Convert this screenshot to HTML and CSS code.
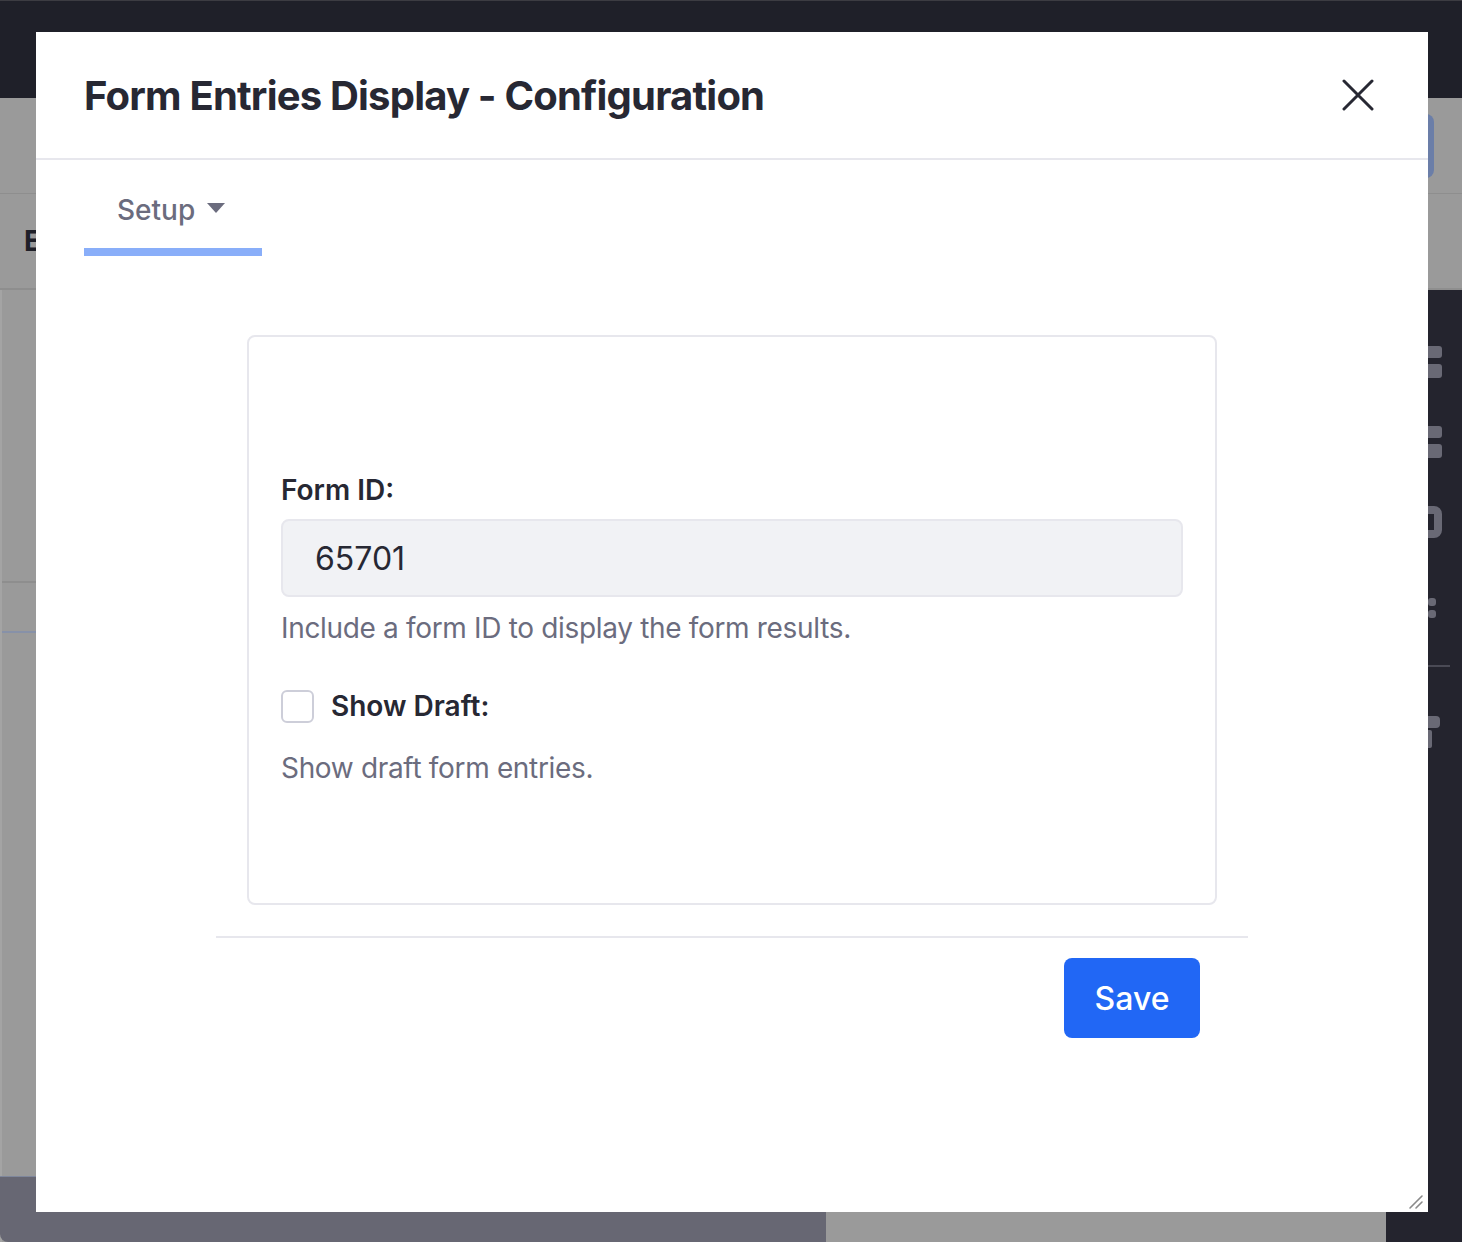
FILE: index.html
```html
<!DOCTYPE html>
<html lang="en">
<head>
<meta charset="utf-8">
<title>Form Entries Display - Configuration</title>
<link rel="stylesheet" href="styles.css">
</head>
<body>
<div class="page">
  <div class="topbar"></div>
  <div class="subheader">
    <div class="sub-row1"><div class="bg-btn"></div></div>
    <div class="sub-row2"><span class="bg-title">Entries</span></div>
  </div>
  <div class="main">
    <div class="content">
      <div class="c-a"></div>
      <div class="c-b"></div>
      <div class="c-c"></div>
      <div class="c-foot"></div>
    </div>
    <div class="sidebar">
      <svg class="side-icons" width="76" height="480" viewBox="0 0 76 480" fill="#696975">
        <rect x="20" y="56" width="36" height="12" rx="3"/>
        <rect x="20" y="74" width="36" height="14" rx="3"/>
        <rect x="20" y="136" width="36" height="12" rx="3"/>
        <rect x="20" y="154" width="36" height="14" rx="3"/>
        <rect x="24" y="220" width="28" height="24" rx="4" fill="none" stroke="#696975" stroke-width="8"/>
        <rect x="26" y="308" width="8" height="8" rx="3"/>
        <rect x="42" y="308" width="8" height="8" rx="3"/>
        <rect x="26" y="320" width="8" height="8" rx="3"/>
        <rect x="42" y="320" width="8" height="8" rx="3"/>
        <rect x="12" y="375" width="52" height="2" fill="#4a4a55"/>
        <rect x="24" y="426" width="30" height="12" rx="4"/>
        <rect x="40" y="440" width="6" height="18" rx="2"/>
      </svg>
    </div>
  </div>
</div>

<div class="modal" role="dialog" aria-labelledby="modal-title">
  <header class="modal-header">
    <h1 class="modal-title" id="modal-title">Form Entries Display - Configuration</h1>
    <button class="close-btn" type="button" aria-label="Close">
      <svg width="32" height="32" viewBox="0 0 32 32" fill="none" stroke="#272833" stroke-width="3" stroke-linecap="round">
        <path d="M2 2 L30 30 M30 2 L2 30"/>
      </svg>
    </button>
  </header>
  <div class="modal-body">
    <nav class="tabs">
      <a class="tab active" href="#">Setup <span class="caret"></span></a>
    </nav>
    <div class="container">
      <div class="card">
        <label class="field-label" for="formId">Form ID:</label>
        <input class="field-input" id="formId" type="text" value="65701">
        <p class="help">Include a form ID to display the form results.</p>
        <label class="check-row">
          <span class="checkbox"></span>
          <span class="check-label">Show Draft:</span>
        </label>
        <p class="help help-2">Show draft form entries.</p>
      </div>
      <div class="divider"></div>
      <div class="footer">
        <button class="save-btn" type="button">Save</button>
      </div>
    </div>
  </div>
  <div class="resize-handle">
    <svg width="16" height="16" viewBox="0 0 16 16" stroke="#8a8a8a" stroke-width="1.6" stroke-linecap="round">
      <path d="M2 14 L14 2 M8 14 L14 8"/>
    </svg>
  </div>
</div>
</body>
</html>
```

FILE: styles.css
```css
* { box-sizing: border-box; }
html, body { margin: 0; padding: 0; }
body {
  width: 1462px;
  height: 1242px;
  overflow: hidden;
  background: #9a9a9a;
  font-family: Inter, "Noto Sans", "Liberation Sans", sans-serif;
  position: relative;
}

/* background page */
.page { display: flex; flex-direction: column; height: 1242px; }
.topbar {
  height: 98px;
  background: #1f2029;
  border-top: 1px solid #3c3c42;
}
.subheader { height: 192px; display: flex; flex-direction: column; }
.sub-row1 {
  height: 96px;
  border-bottom: 1px solid #8e8e8e;
  display: flex;
  justify-content: flex-end;
  padding-top: 16px;
  padding-right: 28px;
}
.bg-btn { width: 120px; height: 64px; border-radius: 8px; background: #6b7ea8; }
.sub-row2 {
  flex: 1;
  border-bottom: 2px solid #8e8e8e;
  display: flex;
  align-items: center;
  padding-left: 24px;
}
.bg-title { font-size: 28px; font-weight: 700; color: #1f2029; }
.main { flex: 1; display: flex; }
.content { flex: 1; display: flex; flex-direction: column; border-left: 2px solid #a4a4a4; }
.c-a { height: 293px; border-bottom: 2px solid #8e8e8e; }
.c-b { height: 50px; border-bottom: 2px solid #8791a8; }
.c-c { flex: 1; }
.c-foot { height: 66px; width: 826px; background: #676773; border-top: 1px solid #7f879c; border-bottom-left-radius: 8px; margin-left: -2px; }
.sidebar { width: 76px; background: #24242e; }
.side-icons { display: block; }

/* modal */
.modal {
  position: absolute;
  left: 36px;
  top: 32px;
  width: 1392px;
  height: 1180px;
  background: #fff;
  display: flex;
  flex-direction: column;
}
.modal-header {
  height: 128px;
  border-bottom: 2px solid #e7e7ed;
  display: flex;
  align-items: center;
  justify-content: space-between;
  padding: 0 54px 0 48px;
}
.modal-title {
  margin: 0;
  font-size: 40px;
  font-weight: 700;
  color: #272833;
  letter-spacing: -0.8px;
}
.close-btn {
  border: 0;
  background: none;
  padding: 0;
  width: 32px;
  height: 32px;
  display: block;
}
.close-btn svg { display: block; }

.modal-body { flex: 1; display: flex; flex-direction: column; }
.tabs { padding: 0 48px; display: flex; }
.tab {
  display: flex;
  align-items: center;
  height: 96px;
  padding: 29px 37px 17px 33px;
  border-bottom: 8px solid #89aef9;
  font-size: 28px;
  line-height: 42px;
  font-weight: 500;
  color: #6b6c7e;
  text-decoration: none;
  gap: 12px;
}
.caret {
  width: 0;
  height: 0;
  border-left: 9px solid transparent;
  border-right: 9px solid transparent;
  border-top: 10px solid #6b6c7e;
  margin-top: -4px;
}

.container { width: 1032px; margin: 0 auto; }
.card {
  margin: 79px 31px 0;
  height: 570px;
  border: 2px solid #e7e7ed;
  border-radius: 8px;
  padding: 132px 32px 0;
  display: flex;
  flex-direction: column;
  align-items: flex-start;
}
.field-label {
  font-size: 28px;
  line-height: 42px;
  font-weight: 600;
  color: #272833;
}
.field-input {
  margin-top: 8px;
  width: 100%;
  height: 78px;
  background: #f1f2f5;
  border: 2px solid #e7e7ed;
  border-radius: 8px;
  padding: 0 32px;
  font-family: inherit;
  font-size: 32px;
  color: #272833;
  outline: none;
}
.help {
  margin: 10px 0 0;
  font-size: 28px;
  line-height: 42px;
  color: #6b6c7e;
  letter-spacing: -0.33px;
}
.check-row {
  margin-top: 36px;
  display: flex;
  align-items: center;
  gap: 17px;
  height: 42px;
}
.checkbox {
  width: 33px;
  height: 33px;
  border: 2px solid #cdced9;
  border-radius: 6px;
  background: #fff;
}
.check-label {
  font-size: 28px;
  line-height: 42px;
  font-weight: 600;
  color: #272833;
}
.help-2 { margin-top: 20px; }

.divider { height: 2px; background: #e7e7ed; margin-top: 31px; }
.footer { display: flex; justify-content: flex-end; padding: 20px 48px 0 0; }
.save-btn {
  width: 136px;
  height: 80px;
  background: #2167f5;
  color: #fff;
  border: 0;
  border-radius: 8px;
  font-family: inherit;
  font-size: 32px;
  font-weight: 500;
}

.resize-handle {
  position: absolute;
  right: 4px;
  bottom: 2px;
  width: 16px;
  height: 16px;
}
.resize-handle svg { display: block; }
```
